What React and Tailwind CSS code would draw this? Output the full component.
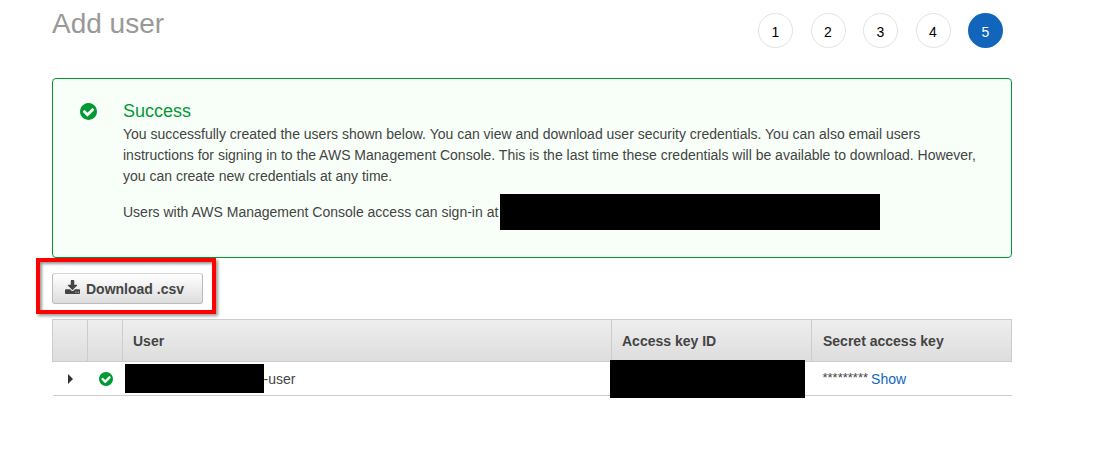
const steps = [1, 2, 3, 4, 5];
const currentStep = 5;

function CheckCircle({ className }) {
  return (
    <svg viewBox="0 0 1536 1536" fill="currentColor" className={className} aria-hidden="true">
      <path d="M1284 606q0-28-18-46l-91-90q-19-19-45-19t-45 19l-408 407-226-226q-19-19-45-19t-45 19l-91 90q-18 18-18 46 0 27 18 45l362 362q19 19 45 19 27 0 46-19l543-543q18-18 18-45z m252 162q0 209-103 385.5t-279.5 279.5-385.5 103-385.5-103-279.5-279.5-103-385.5 103-385.5 279.5-279.5 385.5-103 385.5 103 279.5 279.5 103 385.5z" />
    </svg>
  );
}

function DownloadIcon({ className }) {
  return (
    <svg viewBox="0 0 1664 1536" fill="currentColor" className={className} aria-hidden="true">
      <path d="M1280 1344q0-26-19-45t-45-19-45 19-19 45 19 45 45 19 45-19 19-45z m256 0q0-26-19-45t-45-19-45 19-19 45 19 45 45 19 45-19 19-45z m128-224v320q0 40-28 68t-68 28H96q-40 0-68-28t-28-68v-320q0-40 28-68t68-28h465l135 136q58 56 136 56t136-56l136-136h464q40 0 68 28t28 68z m-325-569q17 41-14 70l-448 448q-18 19-45 19t-45-19L339 621q-31-29-14-70 17-39 59-39h256V64q0-26 19-45t45-19h256q26 0 45 19t19 45v448h256q42 0 59 39z" />
    </svg>
  );
}

function Header() {
  return (
    <header className="flex items-start justify-between pr-[9px]">
      <h1 className="pt-2 text-[28px] leading-8 text-[#999999]">Add user</h1>
      <ol className="mt-[13px] flex w-[245px] justify-between">
        {steps.map((n) => (
          <li
            key={n}
            aria-current={n === currentStep ? "step" : undefined}
            className={
              n === currentStep
                ? "flex size-[35px] items-center justify-center rounded-full bg-[#1166bb] pt-0.5 text-white"
                : "flex size-[35px] items-center justify-center rounded-full border border-[#e3e3e3] pt-0.5 text-black"
            }
          >
            {n}
          </li>
        ))}
      </ol>
    </header>
  );
}

function SuccessAlert() {
  return (
    <section className="mt-[30px] flex rounded border border-[#009933] bg-[#f7fff8] pt-5 pr-5 pb-[27px] pl-[27px]">
      <CheckCircle className="mt-1 mr-[26px] size-[17px] shrink-0 text-[#009933]" />
      <div className="min-w-0 flex-1 leading-[21px]">
        <h2 className="text-lg leading-[25px] text-[#009933]">Success</h2>
        <p>
          You successfully created the users shown below. You can view and download user security
          credentials. You can also email users instructions for signing in to the AWS Management
          Console. This is the last time these credentials will be available to download. However,
          you can create new credentials at any time.
        </p>
        <p className="mt-[7px] flex items-center gap-0.5">
          Users with AWS Management Console access can sign-in at
          <span className="h-9 w-[380px] bg-black" />
        </p>
      </div>
    </section>
  );
}

function DownloadButton() {
  return (
    <div className="relative mt-[15px] self-start">
      <button
        type="button"
        className="flex h-[31px] min-w-[151px] items-center rounded-[3px] border border-[#bbbbbb] border-t-[#d4d4d4] bg-linear-to-b from-white to-[#dddddd] px-3 font-bold"
      >
        <DownloadIcon className="mr-[6px] mb-[3px] h-[14px] w-[15px]" />
        Download .csv
      </button>
      <div className="pointer-events-none absolute -top-[15px] -right-[13px] -bottom-[10px] -left-4 border-4 border-[#ff0000] shadow-[2px_2px_3px_rgba(0,0,0,0.4),inset_2px_2px_3px_rgba(0,0,0,0.4)]" />
    </div>
  );
}

function UsersTable() {
  return (
    <table className="mt-[15px] w-full table-fixed border-collapse text-left">
      <colgroup>
        <col className="w-[35px]" />
        <col className="w-[35px]" />
        <col />
        <col className="w-[200px]" />
        <col className="w-[200px]" />
      </colgroup>
      <thead>
        <tr className="h-[42px] bg-linear-to-b from-[#eeeeee] to-[#dddddd]">
          <th aria-label="Expand" className="border border-[#cccccc]" />
          <th aria-label="Status" className="border border-[#cccccc]" />
          <th className="border border-[#cccccc] px-[10px] font-bold">User</th>
          <th className="border border-[#cccccc] px-[10px] font-bold">Access key ID</th>
          <th className="border border-[#cccccc] px-[11px] font-bold">Secret access key</th>
        </tr>
      </thead>
      <tbody>
        <tr className="h-[34px] border-b border-[#cccccc]">
          <td>
            <button type="button" aria-label="Show details" className="ml-[15px] block">
              <svg viewBox="0 0 5 10" className="h-[10px] w-[5px]" fill="#333333" aria-hidden="true">
                <path d="M0 0 5 5 0 10z" />
              </svg>
            </button>
          </td>
          <td>
            <CheckCircle className="ml-[11px] size-[14px] text-[#009933]" />
          </td>
          <td>
            <div className="flex items-center pl-0.5">
              <span className="h-[29px] w-[139px] bg-black" />
              -user
            </div>
          </td>
          <td className="relative">
            <span className="absolute -top-0.5 -bottom-[3px] -left-0.5 w-[195px] bg-black" />
          </td>
          <td className="px-[11px]">
            <div className="flex items-center gap-[3px]">
              <span className="text-[13px]">*********</span>
              <a href="#show" className="text-[#1166bb]">
                Show
              </a>
            </div>
          </td>
        </tr>
      </tbody>
    </table>
  );
}

export default function App() {
  return (
    <main className="flex flex-col pr-[99px] pb-12 pl-[52px] font-['Liberation_Sans',Arial,sans-serif] text-sm text-[#444444]">
      <Header />
      <SuccessAlert />
      <DownloadButton />
      <UsersTable />
    </main>
  );
}
